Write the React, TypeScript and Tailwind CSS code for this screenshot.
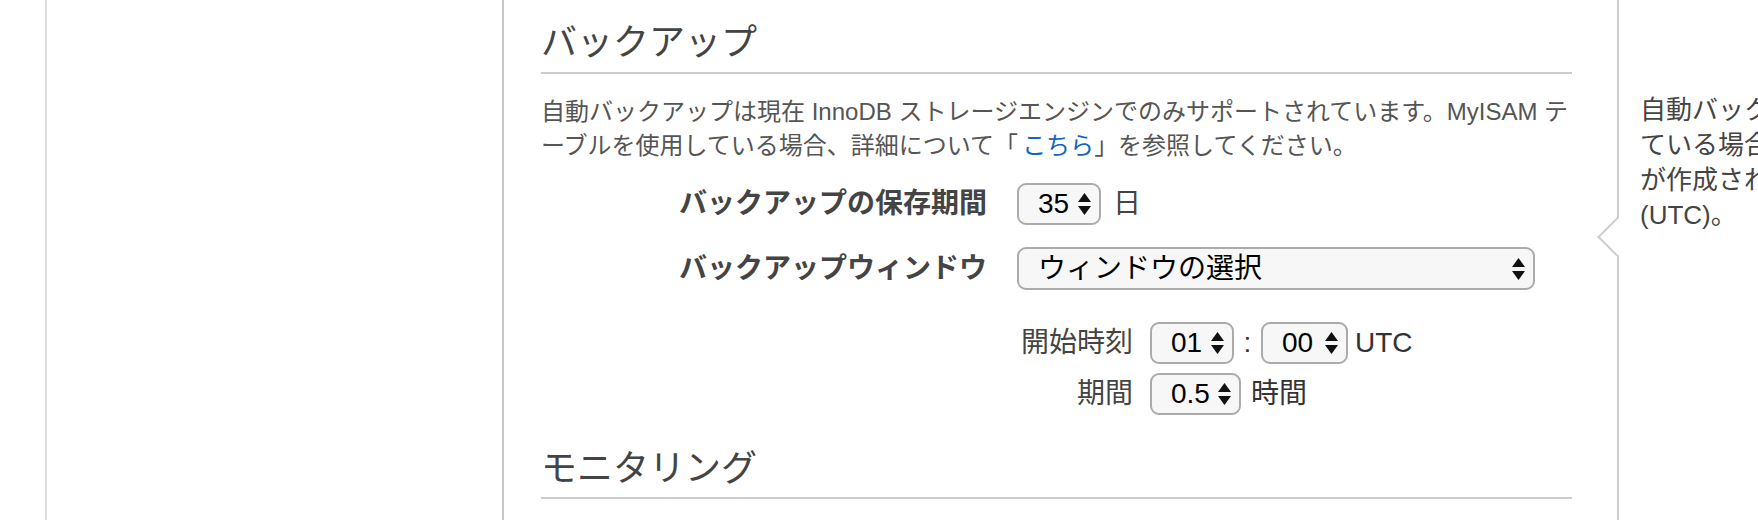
import React from 'react';

const Arrows: React.FC = () => (
    <svg width="13" height="22" viewBox="0 0 13 22" className="shrink-0">
        <polygon points="6.5,0 13,9 0,9" fill="#111" />
        <polygon points="0,13 13,13 6.5,22" fill="#111" />
    </svg>
);

interface FakeSelectProps {
    value: string;
    width: string;
}

// macOS-style native select, drawn by hand so it renders the same headless
const FakeSelect: React.FC<FakeSelectProps> = ({ value, width }) => (
    <div className={`flex items-center justify-between h-[42px] ${width} pl-[19px] pr-[8px] rounded-[9px] border-2 border-[#ababab] bg-[#f7f7f7] text-[28px] text-black leading-none`}>
        <span>{value}</span>
        <Arrows />
    </div>
);

const App: React.FC = () => {
    return (
        <div className="w-[1758px] h-[520px] overflow-hidden bg-white flex font-['Liberation_Sans','Noto_Sans_CJK_JP',sans-serif]">
            <div className="w-[45px] shrink-0" />
            <div className="w-[457px] shrink-0 border-l-2 border-[#dddddd]" />

            <div className="w-[1115px] shrink-0 border-l-2 border-[#c6c6c6] pl-[37px] pr-[45px]">
                <h2 className="mt-[21px] text-[36px] leading-[44px] pb-[7px] border-b-2 border-[#cccccc] text-[#444444]">
                    バックアップ
                </h2>
                <p className="mt-[21px] text-[24px] leading-[34px] text-[#555555] whitespace-nowrap">
                    自動バックアップは現在 InnoDB ストレージエンジンでのみサポートされています。MyISAM テ
                    <br />
                    ーブルを使用している場合、詳細について「<span className="ml-[4px] text-[#1166bb]">こちら</span>」を参照してください。
                </p>

                <div className="mt-[20px] flex items-center gap-[30px] h-[42px]">
                    <div className="w-[446px] text-right font-bold text-[28px] text-[#444444]">バックアップの保存期間</div>
                    <div className="flex items-center gap-[12px]">
                        <FakeSelect value="35" width="w-[84px]" />
                        <span className="text-[28px] text-[#444444]">日</span>
                    </div>
                </div>

                <div className="mt-[22px] flex items-center gap-[30px] h-[43px]">
                    <div className="w-[446px] text-right font-bold text-[28px] text-[#444444]">バックアップウィンドウ</div>
                    <div className="flex items-center justify-between h-[43px] w-[518px] pl-[19px] pr-[8px] rounded-[9px] border-2 border-[#ababab] bg-[#f7f7f7] text-[28px] text-black">
                        <span>ウィンドウの選択</span>
                        <Arrows />
                    </div>
                </div>

                <div className="mt-[32px] ml-[476px] flex items-center gap-[17px] h-[42px]">
                    <div className="w-[116px] text-right text-[28px] text-[#444444]">開始時刻</div>
                    <div className="flex items-center text-[28px] text-[#333333]">
                        <FakeSelect value="01" width="w-[84px]" />
                        <span className="w-[27px] text-center">:</span>
                        <FakeSelect value="00" width="w-[87px]" />
                        <span className="ml-[7px]">UTC</span>
                    </div>
                </div>

                <div className="mt-[9px] ml-[476px] flex items-center gap-[17px] h-[42px]">
                    <div className="w-[116px] text-right text-[28px] text-[#444444]">期間</div>
                    <div className="flex items-center gap-[10px] text-[28px] text-[#333333]">
                        <FakeSelect value="0.5" width="w-[91px]" />
                        <span>時間</span>
                    </div>
                </div>

                <h2 className="mt-[32px] text-[36px] leading-[44px] pb-[6px] border-b-2 border-[#cccccc] text-[#444444]">
                    モニタリング
                </h2>
            </div>

            <div className="relative flex-1 border-l-2 border-[#cdcdcd] pl-[21px] pt-[93px] bg-white">
                <div className="absolute left-[-16px] top-[223px] w-[28px] h-[28px] rotate-45 bg-white border-l-2 border-b-2 border-[#cdcdcd]" />
                <p className="text-[26px] leading-[35px] text-[#444444] whitespace-nowrap">
                    自動バックアップが有効になっ
                    <br />
                    ている場合に、自動バックアップ
                    <br />
                    が作成される毎日の時間範囲
                    <br />
                    (UTC)。
                </p>
            </div>
        </div>
    );
};

export default App;
